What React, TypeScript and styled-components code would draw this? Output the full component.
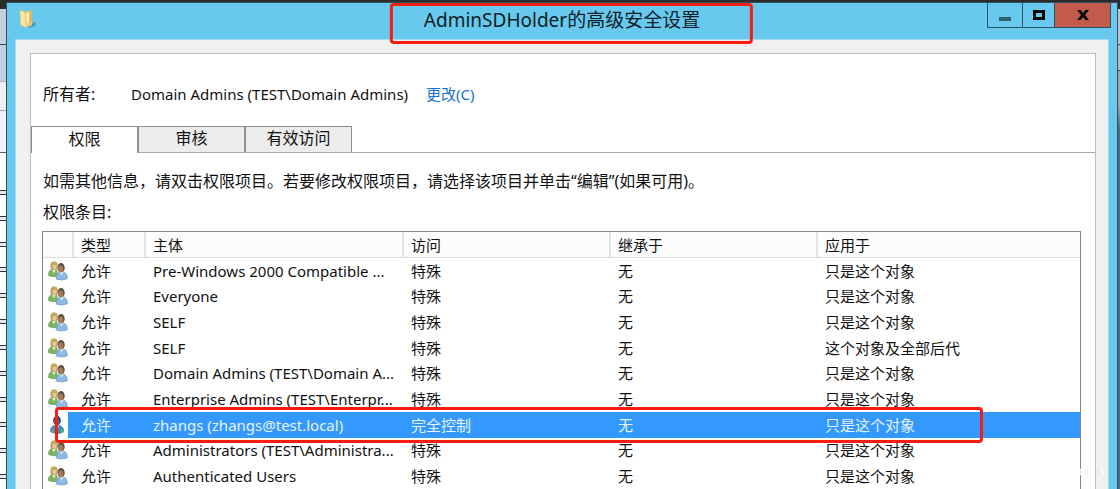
import React from 'react';
import styled, { createGlobalStyle, css } from 'styled-components';

const GlobalStyle = createGlobalStyle`
  * { box-sizing: border-box; }
  body {
    margin: 0;
    overflow: hidden;
    background: #2b2b2b;
    color: #111;
    font: 15px/20px 'Noto Sans', 'Noto Sans CJK SC', sans-serif;
  }
  button { font: inherit; color: inherit; }
`;

const Desktop = styled.div`
  display: flex;
  min-height: 100vh;
  padding-top: 2px;
  background: #2b2b2b;
`;

const BackWindowLeft = styled.div`
  flex: 0 0 6px;
  margin-top: 7px;
  display: flex;
  flex-direction: column;
  background: #fff;
`;

const BackCell = styled.div<{ $h: number; $bg: string; $line: string }>`
  height: ${p => p.$h}px;
  background: ${p => p.$bg};
  border-bottom: 1px solid ${p => p.$line};
`;

const BackLines = styled.div`
  flex: 1;
  display: flex;
  flex-direction: column;
  justify-content: space-between;
  padding: 37px 0 10px;
`;

const DoubleLine = styled.div`
  height: 5px;
  border-top: 1px solid #333;
  border-bottom: 1px solid #333;
  background: #e4e8ec;
`;

const BackWindowRight = styled.div`
  flex: 0 0 2px;
  margin-top: 7px;
  background: linear-gradient(#b9c4d2 0 35px, #444 35px 36px, #b9b9bd 36px 61px, #444 61px 62px, #a4a4a8 62px 95px, #4b6f80 120px);
`;

const Window = styled.main`
  flex: 1;
  min-width: 0;
  display: flex;
  flex-direction: column;
  padding: 0 8px;
  background: #66c9ed;
  border: solid #34505e;
  border-width: 1px 1px 0;
`;

const TitleBar = styled.header`
  position: relative;
  height: 36px;
  display: flex;
  align-items: flex-start;
  justify-content: space-between;
`;

const FolderIcon = styled.svg`
  width: 18px;
  height: 20px;
  margin: 6px 0 0 4px;
`;

const Title = styled.h1`
  position: absolute;
  top: 4px;
  left: 50%;
  transform: translateX(-50%);
  margin: 0;
  font-size: 19px;
  font-weight: 400;
  line-height: 26px;
  white-space: nowrap;
  color: #0b1c26;
`;

const Highlight = styled.span<{ $area: 'title' | 'row' }>`
  position: absolute;
  z-index: 1;
  border: 3px solid #fb1a10;
  border-radius: 4px;
  pointer-events: none;
  ${p => p.$area === 'title'
    ? css`inset: -4px -53px -11px -34px;`
    : css`inset: -5px 97px -5px 12px;`}
`;

const Controls = styled.div`
  display: flex;
  height: 25px;
  border: solid #2f5262;
  border-width: 0 1px 1px;
  margin-right: -2px;
`;

const ControlButton = styled.button<{ $w: number; $bg?: string }>`
  width: ${p => p.$w}px;
  display: flex;
  align-items: center;
  justify-content: center;
  padding: 0;
  border: 0;
  background: ${p => p.$bg ?? 'transparent'};
  & + & { border-left: 1px solid #2f5262; }
`;

const Client = styled.div`
  flex: 1;
  display: flex;
  padding: 13px 12px 0 14px;
  background: #f0f0f0;
  border: solid #a9dcef;
  border-width: 1px 1px 0;
`;

const Panel = styled.section`
  flex: 1;
  min-width: 0;
  background: #fff;
  border: solid #bdbdbd;
  border-width: 1px 1px 0;
`;

const OwnerRow = styled.div`
  display: flex;
  align-items: center;
  height: 72px;
  padding: 8px 12px 0;
`;

const OwnerLabel = styled.span`
  width: 88px;
  font-size: 16px;
`;

const ChangeLink = styled.a`
  margin-left: 18px;
  color: #1a72cf;
  text-decoration: none;
`;

const TabBar = styled.div`
  display: flex;
  height: 27px;
  border-bottom: 1px solid #a9abad;
`;

const Tab = styled.button<{ $active?: boolean }>`
  width: 107px;
  height: ${p => (p.$active ? 27 : 26)}px;
  padding: 0 0 3px;
  font-size: 16px;
  line-height: 22px;
  background: ${p => (p.$active ? '#fff' : '#ececec')};
  border: solid #8c9096;
  border-width: 1px 1px 0;
`;

const Message = styled.p`
  margin: 0;
  padding: 17px 12px 0;
  font-size: 16px;
  line-height: 22px;
`;

const ListLabel = styled.h2`
  margin: 0;
  padding: 8px 12px 7px;
  font-size: 16px;
  font-weight: 400;
  line-height: 24px;
`;

const ListBox = styled.div`
  margin: 0 14px 0 11px;
  border: solid #838588;
  border-width: 1px 1px 0;
`;

const Table = styled.table`
  width: 100%;
  height: 257px;
  table-layout: fixed;
  border-collapse: separate;
  border-spacing: 0;
`;

const HeadCell = styled.th<{ $w?: number }>`
  width: ${p => (p.$w ? `${p.$w}px` : 'auto')};
  height: 26px;
  padding: 0 0 0 7px;
  text-align: left;
  font-weight: 400;
  background: #fcfcfc;
  border-right: 2px solid #e2e2e2;
  border-bottom: 1px solid #dcdcdc;
  &:last-child { border-right: 0; }
`;

const Row = styled.tr<{ $selected?: boolean }>`
  position: relative;
  ${p => p.$selected && css`
    color: #e6f3ff;
    td { background: #3399ff; }
    td:first-child { background: linear-gradient(to right, #fff 25px, #3399ff 25px); }
  `}
`;

const Cell = styled.td`
  padding: 0 6px 0 7px;
  white-space: nowrap;
  overflow: hidden;
`;

const IconCell = styled.td`
  padding: 0 0 0 5px;
  svg { display: block; width: 20px; height: 20px; }
`;

const Watermark = styled.span`
  position: fixed;
  right: 16px;
  bottom: 9px;
  display: flex;
  gap: 12px;
  color: #fff;
`;

function GroupIcon() {
  return (
    <svg viewBox="0 0 20 20" aria-label="组">
      <path d="M0.5 14.5C0.5 10.5 2 8.5 4.6 8.3L8.5 8.5L10 15.2Q5 16.6.5 14.5Z" fill="#7db661" stroke="#6a9c57" strokeWidth=".7" />
      <path d="M3.8 8.5l2 3.8 2.1-3.5z" fill="#e6f0df" />
      <ellipse cx="6.1" cy="4.9" rx="3.6" ry="4.3" fill="#b39650" />
      <ellipse cx="6.5" cy="5.8" rx="2.2" ry="2.9" fill="#e6c79a" />
      <path d="M3.2 4.9C3 1.5 5 .7 6.4.8 8.5.9 9.3 2.5 9.1 4 7 4.3 5.5 3.2 3.2 4.9z" fill="#c7a95e" />
      <path d="M8.3 18.1C8 13.9 9.5 11.4 12.3 10.9L15.4 10.9C18.2 11.8 19.4 14 19.3 17.8Q14 20.1 8.3 18.1Z" fill="#8fb8e4" stroke="#6d97c8" strokeWidth=".7" />
      <path d="M11.7 11l1.8 3.5 2-3.5z" fill="#e6f1fa" />
      <ellipse cx="13.1" cy="6.7" rx="3.6" ry="4.6" fill="#5a5048" />
      <ellipse cx="12.7" cy="7.9" rx="2.6" ry="3.4" fill="#a97a58" />
    </svg>
  );
}

function UserIcon() {
  return (
    <svg viewBox="0 0 20 20" aria-label="用户">
      <path d="M2.5 16.8C2.5 12.6 4.5 10.8 7 10.4h4.2c3 .5 4.6 3 4.6 6.4q-6.4 3.4-13.3 0z" fill="#2f8fcb" stroke="#2878a9" strokeWidth=".7" />
      <path d="M2.5 16.8l2.8-3 .5 4.5zM15.8 16.8l-2.6-3-.6 4.5z" fill="#66b957" />
      <path d="M7 10.4l2 4.5 2.5-4.5z" fill="#a4d5ed" />
      <ellipse cx="9" cy="5.6" rx="3.8" ry="4.9" fill="#25476e" />
      <ellipse cx="8.8" cy="6.8" rx="2.5" ry="3.6" fill="#426f9d" />
    </svg>
  );
}

const entries = [
  ['Pre-Windows 2000 Compatible ...', '特殊', '只是这个对象'],
  ['Everyone', '特殊', '只是这个对象'],
  ['SELF', '特殊', '只是这个对象'],
  ['SELF', '特殊', '这个对象及全部后代'],
  ['Domain Admins (TEST\\Domain A...', '特殊', '只是这个对象'],
  ['Enterprise Admins (TEST\\Enterpr...', '特殊', '只是这个对象'],
  ['zhangs (zhangs@test.local)', '完全控制', '只是这个对象'],
  ['Administrators (TEST\\Administra...', '特殊', '只是这个对象'],
  ['Authenticated Users', '特殊', '只是这个对象'],
];
const selectedIndex = 6;

export default function App() {
  return (
    <Desktop lang="zh-CN">
      <GlobalStyle />
      <BackWindowLeft>
        <BackCell $h={36} $bg="#c3cfde" $line="#3e444b" />
        <BackCell $h={37} $bg="#c3cfde" $line="#b5b5b5" />
        <BackCell $h={29} $bg="#f0f0f0" $line="#aaa" />
        <BackCell $h={42} $bg="#edf3fa" $line="#555c63" />
        <BackLines>
          {Array.from({ length: 12 }, (_, i) => <DoubleLine key={i} />)}
        </BackLines>
      </BackWindowLeft>
      <Window>
        <TitleBar>
          <FolderIcon viewBox="0 0 18 20" aria-hidden="true">
            <path d="M9 17l5-4 3 1-1 3-6 2z" fill="#3c7994" opacity=".6" />
            <path d="M6.5 2.5l6-1 .8 13.5-5.3 2z" fill="#e3bb57" />
            <path d="M1 1l5 2 .6 15.5L1.3 16z" fill="#fbe8a6" stroke="#d4b864" strokeWidth=".6" />
            <path d="M6 5l3-3 1 .4-.2 11.4-3.2 4.7z" fill="#f5d988" />
            <path d="M8.4 4.5l1.4-.8v9l-1.5 2z" fill="#fffbe0" />
            <path d="M6.6 18.5l3.2-5 3.9-.5-1 3.2z" fill="#efcd72" />
          </FolderIcon>
          <Title>
            AdminSDHolder的高级安全设置
            <Highlight $area="title" />
          </Title>
          <Controls>
            <ControlButton $w={34} aria-label="最小化">
              <svg width="12" height="20"><rect y="12" width="12" height="4" fill="#31606f" /></svg>
            </ControlButton>
            <ControlButton $w={32} aria-label="最大化">
              <svg width="12" height="10"><rect x="1.5" y="1.5" width="9" height="7" fill="none" stroke="#050505" strokeWidth="3" /></svg>
            </ControlButton>
            <ControlButton $w={56} $bg="#c25b4c" aria-label="关闭">
              <svg width="12" height="10" viewBox="0 0 12 10"><path d="M0 0h3.6L6 3 8.4 0H12L8 5l4 5H8.4L6 7l-2.4 3H0l4-5z" fill="#080808" /></svg>
            </ControlButton>
          </Controls>
        </TitleBar>
        <Client>
          <Panel>
            <OwnerRow>
              <OwnerLabel>所有者:</OwnerLabel>
              <span>Domain Admins (TEST\Domain Admins)</span>
              <ChangeLink href="#owner">更改(C)</ChangeLink>
            </OwnerRow>
            <TabBar role="tablist">
              <Tab role="tab" aria-selected="true" $active>权限</Tab>
              <Tab role="tab" aria-selected="false">审核</Tab>
              <Tab role="tab" aria-selected="false">有效访问</Tab>
            </TabBar>
            <Message>如需其他信息，请双击权限项目。若要修改权限项目，请选择该项目并单击“编辑”(如果可用)。</Message>
            <ListLabel id="entries-label">权限条目:</ListLabel>
            <ListBox>
              <Table aria-labelledby="entries-label">
                <thead>
                  <tr>
                    <HeadCell $w={31} aria-label="图标" />
                    <HeadCell $w={72}>类型</HeadCell>
                    <HeadCell $w={258}>主体</HeadCell>
                    <HeadCell $w={207}>访问</HeadCell>
                    <HeadCell $w={207}>继承于</HeadCell>
                    <HeadCell>应用于</HeadCell>
                  </tr>
                </thead>
                <tbody>
                  {entries.map(([principal, access, scope], i) => (
                    <Row key={i} $selected={i === selectedIndex}>
                      <IconCell>
                        {i === selectedIndex ? <UserIcon /> : <GroupIcon />}
                        {i === selectedIndex && <Highlight $area="row" />}
                      </IconCell>
                      <Cell>允许</Cell>
                      <Cell>{principal}</Cell>
                      <Cell>{access}</Cell>
                      <Cell>无</Cell>
                      <Cell>{scope}</Cell>
                    </Row>
                  ))}
                </tbody>
              </Table>
            </ListBox>
          </Panel>
        </Client>
      </Window>
      <BackWindowRight />
      <Watermark aria-hidden="true"><span>o</span><span>)</span></Watermark>
    </Desktop>
  );
}
